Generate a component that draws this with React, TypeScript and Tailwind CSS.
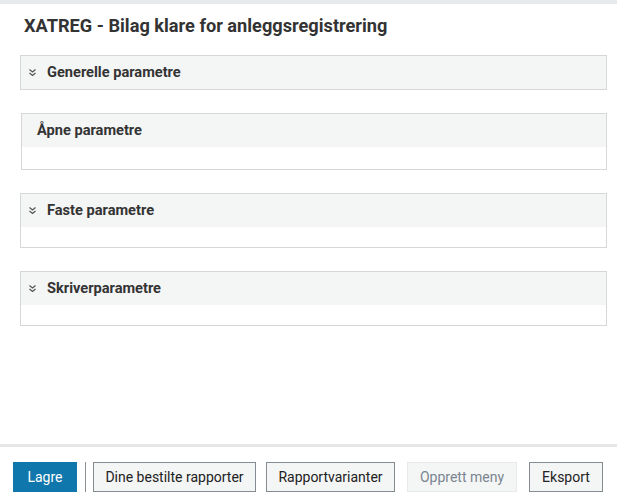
import { ReactNode } from 'react';

function Chevrons() {
    return (
        <svg width="9" height="9" viewBox="0 0 9 9" className="shrink-0 text-[#555]">
            <path d="M1.5 1.5 L4.5 4 L7.5 1.5 M1.5 5 L4.5 7.5 L7.5 5" fill="none" stroke="currentColor" strokeWidth="1.2" />
        </svg>
    );
}

function Panel({ title, icon = true, body = 'h-[20px]', className = '' }: { title: string; icon?: boolean; body?: string; className?: string }) {
    return (
        <div className={`border border-[#d6d8d8] bg-white ${className}`}>
            <div className={`h-[33px] bg-[#f4f5f5] flex items-center gap-[10px] ${icon ? 'pl-[7px]' : 'pl-[15px]'}`}>
                {icon && <Chevrons />}
                <span className="text-[14.6px] font-bold text-[#333]">{title}</span>
            </div>
            {body && <div className={body} />}
        </div>
    );
}

function Btn({ children, className }: { children: ReactNode; className: string }) {
    return (
        <button className={`h-[30px] flex items-center justify-center text-[14px] ${className}`}>
            {children}
        </button>
    );
}

export default function App() {
    return (
        <div className="h-screen w-full flex flex-col bg-white overflow-hidden" style={{ fontFamily: 'Roboto, "Liberation Sans", sans-serif' }}>
            <div className="h-[4px] bg-[#e8e9ea]" />

            <div className="flex-1 flex flex-col">
                <h1 className="pl-[24px] pt-[10px] h-[51px] text-[18.2px] font-bold text-[#333] leading-[24px]">
                    XATREG - Bilag klare for anleggsregistrering
                </h1>

                <div className="flex flex-col gap-[23px] pl-[20px] pr-[10px]">
                    <Panel title="Generelle parametre" body="" />
                    <Panel title="Åpne parametre" icon={false} body="h-[22px]" className="ml-[1px]" />
                    <Panel title="Faste parametre" />
                    <Panel title="Skriverparametre" />
                </div>
            </div>

            <div className="h-[3px] bg-[#e6e6e6] mb-[15px]" />

            {/* Bottom toolbar */}
            <div className="h-[37px] pl-[13px] flex items-start">
                <Btn className="w-[64px] bg-[#0f77ab] text-white">Lagre</Btn>
                <div className="w-[1px] h-[30px] bg-[#8a9196] ml-[8px] mr-[7px]" />
                <Btn className="w-[163px] border border-[#858c91] bg-[#f4f5f5] text-[#222]">Dine bestilte rapporter</Btn>
                <Btn className="w-[129px] ml-[10px] border border-[#858c91] bg-[#f4f5f5] text-[#222]">Rapportvarianter</Btn>
                <Btn className="w-[110px] ml-[12px] border border-[#e8eaea] bg-[#f4f5f5] text-[#7a8590]">Opprett meny</Btn>
                <Btn className="w-[74px] ml-[12px] border border-[#858c91] bg-[#f4f5f5] text-[#222]">Eksport</Btn>
            </div>
        </div>
    );
}
